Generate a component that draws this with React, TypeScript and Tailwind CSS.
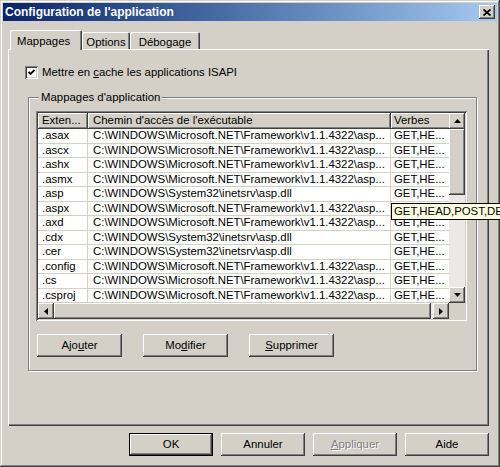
import React from "react";

const FW = "C:\\WINDOWS\\Microsoft.NET\\Framework\\v1.1.4322\\asp...";
const SYS = "C:\\WINDOWS\\System32\\inetsrv\\asp.dll";

const rows: [string, string][] = [
  [".asax", FW],
  [".ascx", FW],
  [".ashx", FW],
  [".asmx", FW],
  [".asp", SYS],
  [".aspx", FW],
  [".axd", FW],
  [".cdx", SYS],
  [".cer", SYS],
  [".config", FW],
  [".cs", FW],
  [".csproj", FW],
];

// classic 3D edges
const raised =
  "shadow-[inset_-1px_-1px_0_#404040,inset_1px_1px_0_#ffffff,inset_-2px_-2px_0_#808080,inset_2px_2px_0_#d4d0c8]";
const headerEdge =
  "shadow-[inset_-1px_-1px_0_#404040,inset_1px_1px_0_#ffffff,inset_-2px_-2px_0_#808080]";
const sunken =
  "shadow-[inset_1px_1px_0_#808080,inset_-1px_-1px_0_#ffffff,inset_2px_2px_0_#404040,inset_-2px_-2px_0_#d4d0c8]";

function Arrow({ dir }: { dir: "up" | "down" | "left" | "right" }) {
  const pts = {
    up: "3.5,0 7,4 0,4",
    down: "0,0 7,0 3.5,4",
    left: "4,0 4,7 0,3.5",
    right: "0,0 4,3.5 0,7",
  }[dir];
  const vertical = dir === "up" || dir === "down";
  return (
    <svg width={vertical ? 7 : 4} height={vertical ? 4 : 7} viewBox={vertical ? "0 0 7 4" : "0 0 4 7"}>
      <polygon points={pts} fill="#000" />
    </svg>
  );
}

function ScrollBtn({ dir }: { dir: "up" | "down" | "left" | "right" }) {
  return (
    <div className={`w-[16px] h-[16px] shrink-0 flex items-center justify-center bg-[#d4d0c8] ${raised}`}>
      <Arrow dir={dir} />
    </div>
  );
}

function Button({
  children,
  width,
  isDefault = false,
  disabled = false,
}: {
  children: React.ReactNode;
  width: string;
  isDefault?: boolean;
  disabled?: boolean;
}) {
  return (
    <div
      className={`${width} h-[23px] flex ${isDefault ? "border border-black" : ""} bg-[#d4d0c8]`}
    >
      <div
        className={`flex-1 flex items-center justify-center ${raised} ${
          disabled ? "text-[#808080] [text-shadow:1px_1px_0_#ffffff]" : "text-black"
        }`}
      >
        {children}
      </div>
    </div>
  );
}

export default function App() {
  return (
    <div className="relative w-[500px] h-[467px] overflow-hidden font-['Liberation_Sans',Arial,sans-serif] text-[11.4px] text-black">
      <div
        className={`h-full flex flex-col p-[3px] bg-[#d4d0c8] shadow-[inset_-1px_-1px_0_#404040,inset_1px_1px_0_#d4d0c8,inset_-2px_-2px_0_#808080,inset_2px_2px_0_#ffffff]`}
      >
        {/* title bar */}
        <div className="h-[18px] shrink-0 flex items-center justify-between pl-[2px] pr-[2px] bg-linear-to-r from-[#0a246a] to-[#a6caf0]">
          <span className="text-white font-bold text-[12px] leading-none">
            Configuration de l'application
          </span>
          <div className={`w-[16px] h-[14px] flex items-center justify-center bg-[#d4d0c8] ${raised}`}>
            <svg width="8" height="7" viewBox="0 0 8 7">
              <path d="M0.5 0.5 L7.5 6.5 M7.5 0.5 L0.5 6.5" stroke="#000" strokeWidth="1.7" />
            </svg>
          </div>
        </div>

        {/* tabs + panel */}
        <div className="pl-[5px] pr-[8px] pt-[9px] flex flex-col">
          <div className="flex items-end h-[19px] pl-[2px]">
            <div className="relative z-10 -mb-px w-[72px] h-[20px] bg-[#d4d0c8] rounded-tl-[2px] rounded-tr-[2px] shadow-[inset_1px_1px_0_#ffffff,inset_-1px_0_0_#404040,inset_-2px_0_0_#808080] flex items-start pt-[3px] pl-[7px]">
              Mappages
            </div>
            <div className="w-[48px] h-[17px] bg-[#d4d0c8] rounded-tl-[2px] rounded-tr-[2px] shadow-[inset_1px_1px_0_#ffffff,inset_-1px_0_0_#404040,inset_-2px_0_0_#808080] flex items-start justify-center pt-[2px]">
              Options
            </div>
            <div className="w-[70px] h-[17px] bg-[#d4d0c8] rounded-tl-[2px] rounded-tr-[2px] shadow-[inset_1px_1px_0_#ffffff,inset_-1px_0_0_#404040,inset_-2px_0_0_#808080] flex items-start justify-center pt-[2px]">
              Débogage
            </div>
          </div>

          <div className="h-[377px] min-w-0 bg-[#d4d0c8] shadow-[inset_1px_1px_0_#ffffff,inset_-1px_-1px_0_#404040,inset_-2px_-2px_0_#808080] pl-[17px] pr-[12px] pt-[17px] flex flex-col">
            <div className="h-[13px] flex items-center gap-[4px]">
              <div className={`w-[13px] h-[13px] bg-white ${sunken} flex items-center justify-center`}>
                <svg width="7" height="7" viewBox="0 0 7 7">
                  <polyline points="0.5,3 2.5,5 6.5,1" fill="none" stroke="#000" strokeWidth="1.8" />
                </svg>
              </div>
              <span>
                Mettre en <span className="underline">c</span>ache les applications ISAPI
              </span>
            </div>

            <fieldset className="min-w-0 ml-[3px] mt-[12px] border border-[#808080] shadow-[inset_1px_1px_0_#ffffff,1px_1px_0_#ffffff] pl-[7px] pr-[9px] pt-[7px] pb-[13px]">
              <legend className="ml-[3px] px-[2px] bg-[#d4d0c8] leading-[13px]">
                Mappages d'application
              </legend>

              {/* list view */}
              <div className={`h-[210px] min-w-0 p-[2px] bg-white ${sunken} flex flex-col`}>
                <div className="h-[190px] min-w-0 flex">
                  <div className="flex-1 min-w-0 overflow-hidden flex flex-col">
                    <div className="h-[16px] flex shrink-0 bg-[#d4d0c8]">
                      <div className={`w-[50px] shrink-0 pl-[4px] flex items-center ${headerEdge}`}>Exten...</div>
                      <div className={`w-[303px] shrink-0 pl-[5px] flex items-center ${headerEdge}`}>
                        Chemin d'accès de l'exécutable
                      </div>
                      <div className={`w-[90px] shrink-0 pl-[3px] flex items-center ${headerEdge}`}>Verbes</div>
                    </div>
                    {rows.map(([ext, path]) => (
                      <div key={ext} className="h-[14.5px] shrink-0 flex border-b border-[#d4d0c8] whitespace-nowrap">
                        <div className="w-[50px] shrink-0 pl-[4px] flex items-center border-r border-[#d4d0c8]">{ext}</div>
                        <div className="w-[303px] shrink-0 pl-[5px] flex items-center overflow-hidden border-r border-[#d4d0c8]">
                          {path}
                        </div>
                        <div className="w-[90px] shrink-0 pl-[3px] flex items-center">GET,HE...</div>
                      </div>
                    ))}
                  </div>
                  {/* vertical scrollbar */}
                  <div className="w-[16px] shrink-0 flex flex-col">
                    <ScrollBtn dir="up" />
                    <div className={`h-[66px] bg-[#d4d0c8] ${raised}`} />
                    <div className="flex-1 bg-[#ebe9e5]" />
                    <ScrollBtn dir="down" />
                  </div>
                </div>
                {/* horizontal scrollbar */}
                <div className="h-[16px] flex">
                  <ScrollBtn dir="left" />
                  <div className={`flex-1 bg-[#d4d0c8] ${raised}`} />
                  <div className="w-[2px] bg-[#ebe9e5]" />
                  <ScrollBtn dir="right" />
                  <div className="w-[16px] shrink-0 bg-[#d4d0c8]" />
                </div>
              </div>

              <div className="mt-[13px] pl-[1px] flex gap-[21px]">
                <Button width="w-[85px]">
                  <span>
                    Ajo<span className="underline">u</span>ter
                  </span>
                </Button>
                <Button width="w-[85px]">
                  <span>
                    Mo<span className="underline">d</span>ifier
                  </span>
                </Button>
                <Button width="w-[85px]">
                  <span>
                    <span className="underline">S</span>upprimer
                  </span>
                </Button>
              </div>
            </fieldset>
          </div>
        </div>

        {/* dialog buttons */}
        <div className="mt-[7px] pr-[8px] flex justify-end gap-[8px]">
          <Button width="w-[84px]" isDefault>
            OK
          </Button>
          <Button width="w-[84px]">Annuler</Button>
          <Button width="w-[84px]" disabled>
            <span>
              <span className="underline">A</span>ppliquer
            </span>
          </Button>
          <Button width="w-[84px]">Aide</Button>
        </div>
      </div>

      {/* tooltip over the Verbes cell */}
      <div className="absolute left-[391px] top-[203px] h-[17px] w-[130px] bg-[#ffffe1] border border-black pl-[2px] flex items-center whitespace-nowrap">
        GET,HEAD,POST,DEBUG
      </div>
    </div>
  );
}
